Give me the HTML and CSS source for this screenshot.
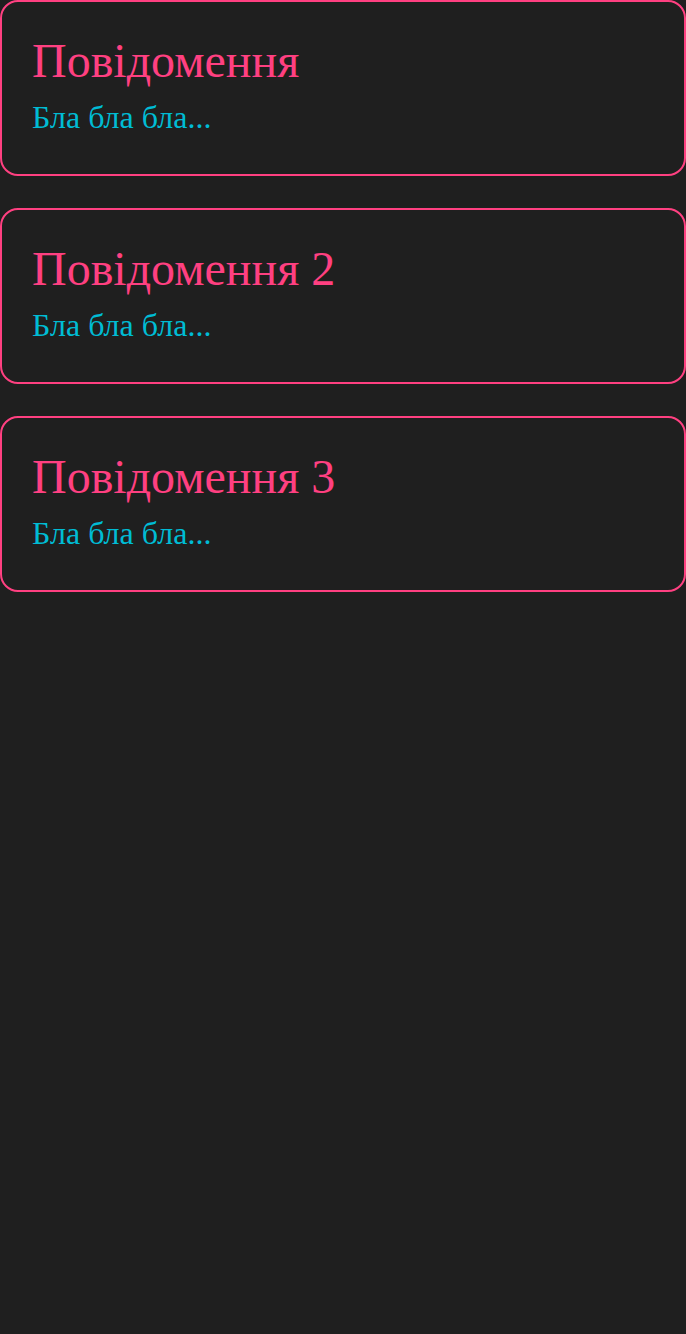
FILE: index.html
```html
<!DOCTYPE html>
<html lang="uk">
<head>
<meta charset="utf-8">
<link rel="stylesheet" href="styles.css">
</head>
<body>
<div class="list">
  <div class="card">
    <div class="title">Повідомення</div>
    <div class="text">Бла бла бла...</div>
  </div>
  <div class="card">
    <div class="title">Повідомення 2</div>
    <div class="text">Бла бла бла...</div>
  </div>
  <div class="card">
    <div class="title">Повідомення 3</div>
    <div class="text">Бла бла бла...</div>
  </div>
</div>
</body>
</html>
```
FILE: styles.css
```css
html, body {
  margin: 0;
  padding: 0;
  background: #1f1f1f;
  height: 100%;
}
body {
  font-family: "Liberation Serif", "Times New Roman", serif;
}
.list {
  display: flex;
  flex-direction: column;
  gap: 32px;
}
.card {
  border: 2px solid #ff4081;
  border-radius: 18px;
  padding: 32px 30px 38px;
  height: 176px;
  box-sizing: border-box;
  display: flex;
  flex-direction: column;
}
.title {
  color: #ff4081;
  font-size: 48px;
  line-height: 53px;
}
.text {
  color: #00bcd4;
  font-size: 32px;
  line-height: 35px;
  margin-top: 13px;
}
```
